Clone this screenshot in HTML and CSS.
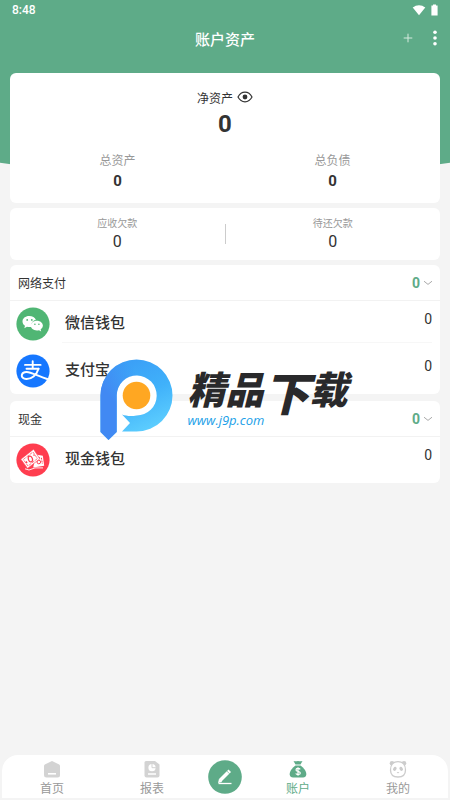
FILE: index.html
```html
<!DOCTYPE html>
<html lang="zh-CN">

<head>
    <meta charset="UTF-8">
    <meta name="viewport" content="width=device-width, initial-scale=1.0">
    <title>账户资产</title>
    <link rel="stylesheet" href="styles.css">
</head>

<body>
    <div class="hero"></div>

    <div class="statusbar">
        <span>8:48</span>
        <span class="status-icons">
            <svg width="14" height="12" viewBox="0 0 14 12">
                <path d="M0.7 3.6C4.3 0.3 9.7 0.3 13.3 3.6L7 11.2Z" fill="#fff" />
            </svg>
            <svg width="7" height="12" viewBox="0 0 7 12">
                <path d="M2 0.5h3v1h1.6v10H0.4v-10H2z" fill="#fff" />
            </svg>
        </span>
    </div>

    <header class="titlebar">
        <h1>账户资产</h1>
        <div class="actions">
            <button type="button" aria-label="添加">
                <svg width="10" height="10" viewBox="0 0 10 10">
                    <path d="M5 0.700v8.600M0.700 5h8.600" stroke="#d5eade" />
                </svg>
            </button>
            <button type="button" aria-label="更多">
                <svg width="4" height="16" viewBox="0 0 4 16" fill="#fff">
                    <circle cx="2" cy="2.2" r="1.8" />
                    <circle cx="2" cy="8" r="1.8" />
                    <circle cx="2" cy="13.8" r="1.8" />
                </svg>
            </button>
        </div>
    </header>

    <main>
        <section class="card summary">
            <div class="net-label">
                <span>净资产</span>
                <button type="button" aria-label="显示金额">
                    <svg width="16" height="12" viewBox="0 0 16 12">
                        <path d="M1 6C4.4-0.4 11.6-0.4 15 6C11.6 12.4 4.4 12.4 1 6Z" fill="none" stroke="#333" stroke-width="1.2" />
                        <circle cx="8" cy="6" r="2.4" fill="#333" />
                    </svg>
                </button>
            </div>
            <div class="net-value">0</div>
            <div class="columns">
                <div>
                    <span class="label">总资产</span>
                    <strong>0</strong>
                </div>
                <div>
                    <span class="label">总负债</span>
                    <strong>0</strong>
                </div>
            </div>
        </section>

        <section class="card debts">
            <div>
                <span class="label">应收欠款</span>
                <span class="value">0</span>
            </div>
            <div>
                <span class="label">待还欠款</span>
                <span class="value">0</span>
            </div>
        </section>

        <section class="card group">
            <button type="button" class="group-head">
                <span>网络支付</span>
                <strong>0</strong>
                <svg width="10" height="6" viewBox="0 0 10 6">
                    <path d="M1 1.2L5 4.4L9 1.2" fill="none" stroke="#aaa" />
                </svg>
            </button>
            <ul>
                <li>
                    <svg width="34" height="34" viewBox="0 0 34 34">
                        <circle cx="17" cy="17" r="16.6" fill="#50b674" />
                        <path d="M13.2 9C9.3 9 6.5 11.4 6.5 14.5c0 1.8 1 3.3 2.5 4.3l-.7 2.4 2.7-1.4c1.2.4 3 .4 4.2.1C14.500 15.500 17.800 12.800 19.900 12.900C19 10.500 16.400 9 13.200 9Z" fill="#fff" />
                        <path d="M20.800 13.700c-3.500 0-6 2.200-6 4.900s2.500 4.900 6 4.900c.8 0 1.500-.1 2.200-.3l2.200 1.200-.6-2c1.400-.9 2.300-2.300 2.300-3.800 0-2.700-2.600-4.900-6.100-4.900Z" fill="#fff" />
                        <g fill="#50b674">
                            <circle cx="11.200" cy="12.900" r="0.900" />
                            <circle cx="15.800" cy="12.900" r="0.900" />
                            <circle cx="18.900" cy="17.200" r="0.800" />
                            <circle cx="22.900" cy="17.200" r="0.800" />
                        </g>
                    </svg>
                    <div class="item">
                        <span class="name">微信钱包</span>
                        <span class="amount">0</span>
                    </div>
                </li>
                <li>
                    <svg width="34" height="34" viewBox="0 0 34 34">
                        <circle cx="17" cy="17" r="16.6" fill="#1677ff" />
                        <g fill="none" stroke="#fff" stroke-linecap="round">
                            <path d="M9 10.900h15.600M16.700 7.300v7M10.500 14.700h12" stroke-width="1.900" />
                            <path d="M22.500 14.700C20.500 21.500 15.300 25.200 10.200 25C7.300 24.900 5.500 23.300 5.800 21.200C6.300 17.900 10.300 17.500 14.300 18.700C19.500 20.300 24.500 22.800 31.200 25" stroke-width="2" />
                        </g>
                    </svg>
                    <div class="item">
                        <span class="name">支付宝</span>
                        <span class="amount">0</span>
                    </div>
                </li>
            </ul>
        </section>

        <section class="card group">
            <button type="button" class="group-head">
                <span>现金</span>
                <strong>0</strong>
                <svg width="10" height="6" viewBox="0 0 10 6">
                    <path d="M1 1.2L5 4.4L9 1.2" fill="none" stroke="#aaa" />
                </svg>
            </button>
            <ul>
                <li>
                    <svg width="34" height="34" viewBox="0 0 34 34">
                        <circle cx="17" cy="17" r="16.6" fill="#ff3d4f" />
                        <path d="M20 11.500l6.800 1.200 1.400 10.100-11 1.800z" fill="#fff" />
                        <g fill="none" stroke="#ff3d4f">
                            <path d="M22 14.500l3.400.5 1 6" stroke-dasharray="2 1" />
                            <circle cx="22.800" cy="19" r="1.800" />
                        </g>
                        <path d="M4.800 16.200L17.600 6.200L23.800 15.800L11.500 25.400Z" fill="#fff" stroke="#ff3d4f" stroke-width="0.600" />
                        <g fill="none" stroke="#ff3d4f">
                            <path d="M7.300 16.500L17 9L21.400 15.600L12 23Z" stroke-width="0.700" stroke-dasharray="3 1" />
                            <ellipse cx="14.400" cy="16" rx="2" ry="3" transform="rotate(-20 14.400 16)" stroke-width="1.200" />
                            <path d="M17.700 11.500l.7 1.200M10 18.500l1 1.500" stroke-width="1.400" />
                        </g>
                        <path d="M9 25.800L13 27L19 24.900L27 24.900" fill="none" stroke="#fff" stroke-width="0.900" />
                    </svg>
                    <div class="item">
                        <span class="name">现金钱包</span>
                        <span class="amount">0</span>
                    </div>
                </li>
            </ul>
        </section>
    </main>

    <div class="watermark">
        <svg width="74" height="82" viewBox="0 0 74 82">
            <defs>
                <linearGradient id="ring" x1="0.2" y1="0" x2="0.6" y2="1">
                    <stop offset="0" stop-color="#3a9cf6" />
                    <stop offset="0.5" stop-color="#40b1fa" />
                    <stop offset="1" stop-color="#62d3ff" />
                </linearGradient>
                <linearGradient id="stem" gradientUnits="userSpaceOnUse" x1="4" y1="30" x2="32" y2="8">
                    <stop offset="0" stop-color="#4189f3" />
                    <stop offset="1" stop-color="#4189f3" stop-opacity="0" />
                </linearGradient>
            </defs>
            <circle cx="36.500" cy="36.500" r="24" fill="#fff" />
            <path d="M0.500 73V36.500A36 36 0 1 1 36.500 72.500H22L30 64L22 55.500C26 57 31 57.500 36.500 56.500A20 20 0 1 0 16.700 36V73L8.500 81Z" fill="url(#ring)" />
            <path d="M0.500 73V36.500A36 36 0 0 1 36.500 0.500V16.500A20 20 0 0 0 16.700 36V73L8.500 81Z" fill="url(#stem)" />
            <circle cx="36.500" cy="36.500" r="13.800" fill="#ffa722" />
        </svg>
        <div class="brand">
            <span class="brand-name">精品<span class="tall">下</span>载</span>
            <span class="brand-url">www.j9p.com</span>
        </div>
    </div>

    <nav class="tabbar">
        <a href="#">
            <svg width="18" height="18" viewBox="0 0 18 18">
                <path d="M9 1L16.200 4.500Q17 5 17 6V15Q17 17.500 14.500 17.500H3.500Q1 17.500 1 15V6Q1 5 1.800 4.500Z" fill="#d3d3d3" />
                <path d="M5 13.800h8" stroke="#fff" stroke-width="1.600" />
            </svg>
            <span>首页</span>
        </a>
        <a href="#">
            <svg width="18" height="18" viewBox="0 0 18 18">
                <path d="M3 1H12L16.500 4.500V15.500Q16.500 17.500 14.500 17.500H3.500Q1.500 17.500 1.500 15.500V2.500Q1.500 1 3 1Z" fill="#d3d3d3" />
                <circle cx="9" cy="7.700" r="3.600" fill="#fff" />
                <path d="M9 4V7.700H12.800" fill="none" stroke="#d3d3d3" />
                <path d="M5 14h8" stroke="#fff" stroke-width="1.500" />
            </svg>
            <span>报表</span>
        </a>
        <button type="button" class="write" aria-label="记一笔">
            <svg width="34" height="34" viewBox="0 0 34 34">
                <circle cx="17" cy="17" r="16.800" fill="#5eab88" />
                <path d="M12 20.500L20 12.500" stroke="#fff" stroke-width="3.600" />
                <path d="M19.800 10.200l2.500 2.500" stroke="#fff" stroke-width="2" />
                <path d="M10 23l1-4 3.200 3z" fill="#fff" />
                <path d="M10.500 23.500h13" stroke="#fff" stroke-width="1.300" />
            </svg>
        </button>
        <a href="#" class="active">
            <svg width="18" height="18" viewBox="0 0 18 18">
                <path d="M4.500 1Q6.500 1.600 9 1Q11.500 1.600 13.500 1L11.500 4.500H6.500Z" fill="#5eab88" />
                <path d="M6.500 5.500H11.500C15 8 17.500 11.500 17.300 14.500Q17 17.500 14 17.500H4Q1 17.500 0.700 14.500C0.500 11.500 3 8 6.500 5.500Z" fill="#5eab88" />
                <path d="M11.200 9.300C10.300 8 7 8 7 9.900C7 11.800 11.300 10.900 11.300 13C11.300 15 7.700 14.900 6.700 13.500M9 7.200v8.600" fill="none" stroke="#fff" stroke-width="1.200" />
            </svg>
            <span>账户</span>
        </a>
        <a href="#">
            <svg width="18" height="18" viewBox="0 0 18 18">
                <circle cx="3" cy="3.300" r="2.300" fill="#ccc" />
                <circle cx="15" cy="3.300" r="2.300" fill="#ccc" />
                <path d="M9 1.700C13.500 1.700 16.500 5 16.500 10C16.500 15 13.500 17 9 17S1.500 15 1.500 10C1.500 5 4.500 1.700 9 1.700Z" fill="#fff" stroke="#ccc" stroke-width="1.300" />
                <ellipse cx="5.800" cy="8.800" rx="1.600" ry="2.200" transform="rotate(35 5.800 8.800)" fill="#ccc" />
                <ellipse cx="12.200" cy="8.800" rx="1.600" ry="2.200" transform="rotate(-35 12.200 8.800)" fill="#ccc" />
                <path d="M7.700 12h2.600L9 13.500Z" fill="#ccc" />
            </svg>
            <span>我的</span>
        </a>
    </nav>
</body>

</html>
```

FILE: styles.css
```css
* {
    box-sizing: border-box;
}

body {
    position: relative;
    display: flex;
    flex-direction: column;
    min-height: 100vh;
    margin: 0;
    background: #f4f4f4;
    color: #333;
    font-family: Roboto, "Noto Sans CJK SC", sans-serif;
    font-size: 12px;
}

button {
    padding: 0;
    border: none;
    background: none;
    color: inherit;
    font: inherit;
    cursor: pointer;
}

svg {
    display: block;
    flex-shrink: 0;
}

/* green backdrop with a curved lower edge */
.hero {
    position: absolute;
    top: 0;
    left: 0;
    right: 0;
    height: 179px;
    background: #5eab88;
    clip-path: ellipse(120% 100% at 50% 0);
    z-index: -1;
}

.statusbar {
    display: flex;
    justify-content: space-between;
    align-items: center;
    height: 20px;
    padding: 0 12px;
    color: #fff;
    font-weight: 500;
}

.status-icons {
    display: flex;
    gap: 5px;
}

.titlebar {
    display: grid;
    grid-template-columns: 1fr auto 1fr;
    align-items: center;
    height: 36px;
    padding: 0 13px;
    color: #fff;
}

.titlebar h1 {
    grid-column: 2;
    margin: 0;
    font-size: 15px;
    font-weight: 500;
}

.actions {
    display: flex;
    justify-content: flex-end;
    align-items: center;
    gap: 20px;
}

main {
    flex: 1;
    padding: 17px 10px;
}

.card {
    margin-bottom: 5px;
    border-radius: 6px;
    background: #fff;
}

.label {
    color: #999;
}

.summary {
    padding: 16px 0 12px;
    text-align: center;
}

.net-label {
    display: flex;
    justify-content: center;
    gap: 4px;
    line-height: 20px;
}

.net-label button {
    height: 16px;
}

.net-value {
    font-size: 24px;
    font-weight: 700;
    line-height: 30px;
}

.columns {
    display: flex;
    margin-top: 12px;
}

.columns div {
    display: flex;
    flex: 1;
    flex-direction: column;
    line-height: 20px;
}

.columns strong {
    font-size: 15px;
}

.debts {
    display: flex;
    align-items: center;
    height: 52px;
    text-align: center;
}

.debts div {
    display: flex;
    flex: 1;
    flex-direction: column;
    justify-content: center;
    height: 20px;
}

.debts div + div {
    border-left: 1px solid #ccc;
}

.debts .label {
    font-size: 10px;
    line-height: 16px;
}

.debts .value {
    font-size: 16px;
    line-height: 20px;
}

.group + .group {
    margin-top: 6px;
}

.group-head {
    display: flex;
    align-items: center;
    gap: 3px;
    width: 100%;
    height: 36px;
    padding: 0 7px 0 8px;
    border-bottom: 1px solid #f2f2f2;
}

.group-head span {
    margin-right: auto;
}

.group-head strong {
    color: #5eab88;
    font-size: 14px;
}

.group ul {
    margin: 0;
    padding: 0;
    list-style: none;
}

.group li {
    display: flex;
    align-items: center;
    gap: 12px;
    height: 46px;
    padding: 0 8px 0 6px;
}

.group li + li {
    margin-top: 1px;
}

.item {
    display: flex;
    flex: 1;
    justify-content: space-between;
    height: 37px;
    padding-left: 3px;
    border-bottom: 1px solid #f7f7f7;
}

li:last-child .item {
    border-bottom-color: transparent;
}

.name {
    font-size: 15px;
    font-weight: 500;
    line-height: 34px;
}

.amount {
    font-size: 14px;
    line-height: 26px;
}

.group:last-child {
    margin-top: 7px;
}

.watermark {
    position: absolute;
    top: 359px;
    left: 0;
    right: 0;
    display: flex;
    justify-content: center;
    gap: 13px;
    padding-right: 2px;
    pointer-events: none;
}

.brand {
    display: flex;
    flex-direction: column;
    font-style: italic;
}

.brand-name {
    height: 53px;
    color: #29292b;
    font-family: "Noto Sans CJK SC", sans-serif;
    font-size: 38px;
    font-weight: 900;
    line-height: 58px;
}

.tall {
    font-size: 46px;
    line-height: 1;
    vertical-align: -7px;
}

.brand-url {
    color: #1c9fe8;
    font-family: "Open Sans", sans-serif;
    font-size: 13px;
    line-height: 16px;
}

.tabbar {
    display: flex;
    align-items: center;
    height: 43px;
    margin: 0 2px 2px;
    border-radius: 16px 16px 0 0;
    background: #fff;
}

.tabbar a {
    display: flex;
    flex: 1;
    flex-direction: column;
    align-items: center;
    gap: 2px;
    padding-top: 4px;
    color: #999;
    line-height: 18px;
    text-decoration: none;
}

.tabbar a.active {
    color: #5eab88;
}

.write {
    display: flex;
    justify-content: center;
    width: 46px;
}
```
